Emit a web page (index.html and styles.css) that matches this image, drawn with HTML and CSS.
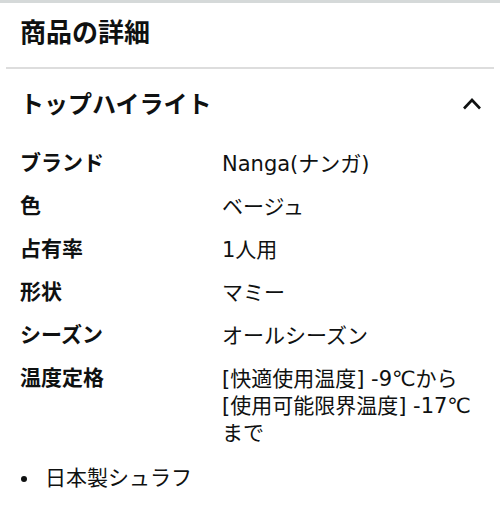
FILE: index.html
```html
<!DOCTYPE html>
<html lang="ja">
<head>
<meta charset="utf-8">
<link rel="stylesheet" href="styles.css">
</head>
<body>
<div class="page">
  <header class="title-bar">
    <h1 class="title">商品の詳細</h1>
  </header>
  <section class="section">
    <div class="section-head">
      <h2 class="section-title">トップハイライト</h2>
      <svg class="chevron" width="20" height="14" viewBox="0 0 20 14" aria-hidden="true">
        <polyline points="2,12.5 10,4 18,12.5" fill="none" stroke="#0f1111" stroke-width="2.6" stroke-linecap="butt" stroke-linejoin="miter"/>
      </svg>
    </div>
    <dl class="specs">
      <dt>ブランド</dt><dd>Nanga(ナンガ)</dd>
      <dt>色</dt><dd>ベージュ</dd>
      <dt>占有率</dt><dd>1人用</dd>
      <dt>形状</dt><dd>マミー</dd>
      <dt>シーズン</dt><dd>オールシーズン</dd>
      <dt>温度定格</dt><dd>[快適使用温度] -9℃から<br>[使用可能限界温度] -17℃<br>まで</dd>
    </dl>
    <ul class="bullets">
      <li>日本製シュラフ</li>
    </ul>
  </section>
</div>
</body>
</html>
```

FILE: styles.css
```css
* { box-sizing: border-box; }
html, body {
  margin: 0;
  padding: 0;
  background: #fff;
}
body {
  font-family: "DejaVu Sans", "Noto Sans CJK JP", sans-serif;
  color: #0f1111;
}
.page {
  border-top: 3px solid #d5d9d9;
}
.title-bar {
  margin: 0 6px;
  padding: 11px 14px 0;
  height: 66px;
  border-bottom: 2px solid #dddddd;
  font-family: "Noto Sans CJK JP", sans-serif;
}
.title {
  margin: 0;
  font-size: 26px;
  line-height: 34px;
  font-weight: 700;
}
.section {
  padding: 0 20px;
}
.section-head {
  display: flex;
  align-items: center;
  justify-content: space-between;
  padding-bottom: 4px;
  height: 72px;
  font-family: "Noto Sans CJK JP", sans-serif;
}
.section-title {
  margin: 0;
  font-size: 24px;
  line-height: 32px;
  font-weight: 700;
}
.chevron {
  display: block;
  margin-right: -2px;
}
.specs {
  display: grid;
  grid-template-columns: 202px 1fr;
  align-items: start;
  row-gap: 16px;
  margin: 10px 0 0;
  font-size: 21px;
  line-height: 27px;
}
.specs dt {
  font-family: "Noto Sans CJK JP", sans-serif;
  font-weight: 700;
  line-height: 21px;
}
.specs dd {
  margin: 0;
}
.bullets {
  list-style: none;
  margin: 18px 0 0;
  padding: 0;
  font-size: 21px;
  line-height: 27px;
}
.bullets li {
  display: flex;
  align-items: center;
  gap: 18px;
}
.bullets li::before {
  content: "";
  flex: none;
  width: 6px;
  height: 6px;
  border-radius: 50%;
  background: #0f1111;
  margin-left: 1px;
}
```
